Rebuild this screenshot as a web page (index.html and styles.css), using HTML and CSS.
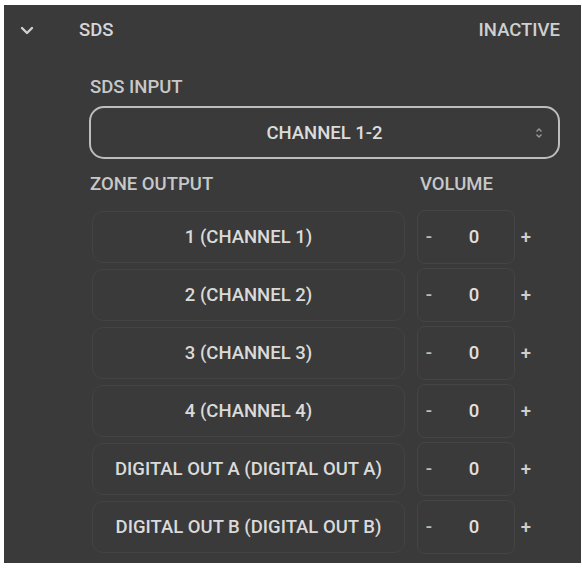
FILE: index.html
```html
<!DOCTYPE html>
<html lang="en">
<head>
    <meta charset="UTF-8">
    <meta name="viewport" content="width=device-width, initial-scale=1.0">
    <title>SDS</title>
    <link rel="stylesheet" href="styles.css">
</head>
<body>
    <div class="panel">
        <div class="head">
            <svg class="chev" width="14" height="9" viewBox="0 0 14 9">
                <path d="M2 2 L7 7 L12 2" fill="none" stroke="#d0d0d0" stroke-width="2.4" stroke-linecap="round" stroke-linejoin="round"/>
            </svg>
            <span class="title">SDS</span>
            <span class="state">INACTIVE</span>
        </div>

        <div class="body">
            <div class="label">SDS INPUT</div>
            <div class="select">
                <span>CHANNEL 1-2</span>
                <svg class="updown" width="8" height="12" viewBox="0 0 8 12">
                    <path d="M1.5 4.5 L4 2 L6.5 4.5 M1.5 7.5 L4 10 L6.5 7.5" fill="none" stroke="#9a9a9a" stroke-width="1.4"/>
                </svg>
            </div>

            <div class="cols">
                <span class="label">ZONE OUTPUT</span>
                <span class="label vol-label">VOLUME</span>
            </div>

            <ul class="rows">
                <li><div class="zone">1 (CHANNEL 1)</div><div class="vol"><div class="box"><span class="minus">-</span><span class="num">0</span></div><span class="plus">+</span></div></li>
                <li><div class="zone">2 (CHANNEL 2)</div><div class="vol"><div class="box"><span class="minus">-</span><span class="num">0</span></div><span class="plus">+</span></div></li>
                <li><div class="zone">3 (CHANNEL 3)</div><div class="vol"><div class="box"><span class="minus">-</span><span class="num">0</span></div><span class="plus">+</span></div></li>
                <li><div class="zone">4 (CHANNEL 4)</div><div class="vol"><div class="box"><span class="minus">-</span><span class="num">0</span></div><span class="plus">+</span></div></li>
                <li><div class="zone">DIGITAL OUT A (DIGITAL OUT A)</div><div class="vol"><div class="box"><span class="minus">-</span><span class="num">0</span></div><span class="plus">+</span></div></li>
                <li><div class="zone">DIGITAL OUT B (DIGITAL OUT B)</div><div class="vol"><div class="box"><span class="minus">-</span><span class="num">0</span></div><span class="plus">+</span></div></li>
            </ul>
        </div>
    </div>
</body>
</html>
```

FILE: styles.css
```css
html, body{
    margin: 0;
    background: #fff;
}
body{
    padding: 5px 1px 0 4px;
    font-family: Roboto, "Liberation Sans", Arial, sans-serif;
    font-weight: 500;
    font-size: 18.5px;
    color: #d6d6d6;
}
.panel{
    width: 577px;
    height: 558px;
    box-sizing: border-box;
    background: #3a3a3a;
}
.head{
    display: flex;
    align-items: center;
    height: 50px;
    padding: 0 21px 0 16px;
}
.chev{
    margin-right: 45px;
}
.title{
    flex: 1;
}
.state{
    color: #cfcfcf;
}
.body{
    padding: 0 21px 0 85px;
}
.label{
    color: #c8c8c8;
}
.body > .label{
    padding: 21px 0 0 1px;
    height: 30px;
}
.select{
    display: flex;
    align-items: center;
    justify-content: center;
    position: relative;
    height: 53px;
    box-sizing: border-box;
    border: 2px solid #bdbdbd;
    border-radius: 15px;
    color: #dcdcdc;
}
.updown{
    position: absolute;
    right: 15px;
    top: 19px;
}
.cols{
    display: flex;
    padding: 14px 0 0 1px;
    height: 37px;
}
.cols .label:first-child{
    width: 330px;
}
.rows{
    margin: 0;
    padding: 0;
    list-style: none;
}
.rows li{
    display: flex;
    align-items: center;
    height: 54px;
    margin-bottom: 4px;
}
.zone{
    width: 313px;
    height: 52px;
    margin-left: 3px;
    box-sizing: border-box;
    display: flex;
    align-items: center;
    justify-content: center;
    border: 1px solid #434343;
    border-radius: 11px;
    color: #dadada;
}
.vol{
    display: flex;
    align-items: center;
    margin-left: 12px;
}
.box{
    display: flex;
    align-items: center;
    width: 98px;
    height: 54px;
    box-sizing: border-box;
    border: 1px solid #454545;
    border-radius: 8px;
}
.minus{
    width: 14px;
    text-align: right;
    color: #bdbdbd;
}
.num{
    flex: 1;
    text-align: center;
    padding-left: 2px;
    color: #e0e0e0;
}
.plus{
    width: 22px;
    text-align: center;
    color: #cfcfcf;
}
```
